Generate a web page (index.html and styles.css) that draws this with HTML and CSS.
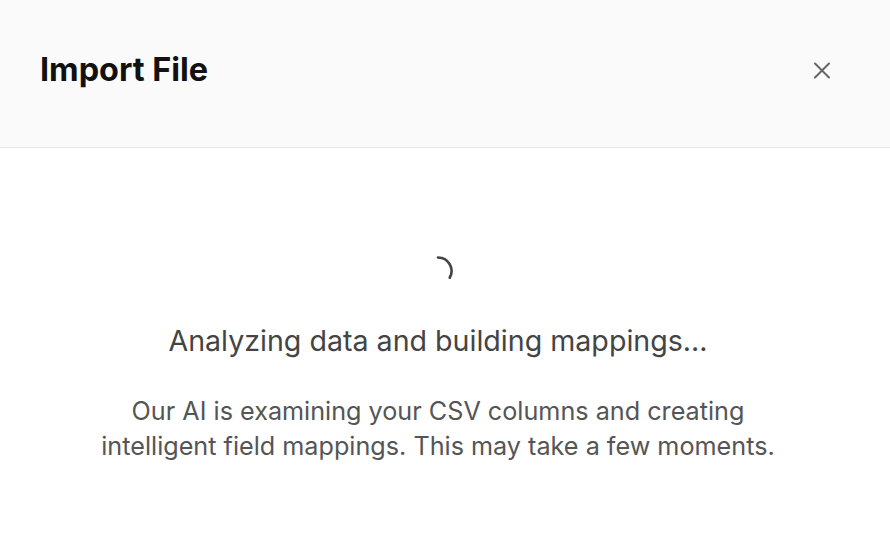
FILE: index.html
```html
<!DOCTYPE html>
<html>
<head>
<meta charset="utf-8">
<link rel="stylesheet" href="styles.css">
</head>
<body>
<div class="modal">
  <header class="modal-header">
    <h1 class="modal-title">Import File</h1>
    <button class="close-btn" aria-label="Close">
      <svg width="20" height="20" viewBox="0 0 20 20" fill="none" stroke="#666" stroke-width="2" stroke-linecap="round"><path d="M3 3.5L17 17.5M17 3.5L3 17.5"/></svg>
    </button>
  </header>
  <main class="modal-body">
    <svg class="spinner" width="32" height="32" viewBox="0 0 32 32" fill="none"><path d="M16 2.5A13.5 13.5 0 0 1 27.7 22.75" stroke="#444" stroke-width="2.6" stroke-linecap="round"/></svg>
    <h2 class="status">Analyzing data and building mappings...</h2>
    <p class="desc">Our AI is examining your CSV columns and creating intelligent field mappings. This may take a few moments.</p>
  </main>
</div>
</body>
</html>
```
FILE: styles.css
```css
* { box-sizing: border-box; }
html, body { margin: 0; padding: 0; background: #fff; }
body { font-family: Inter, "Noto Sans", sans-serif; width: 890px; height: 558px; overflow: hidden; }
.modal { display: flex; flex-direction: column; height: 100%; }
.modal-header {
  height: 148px;
  background: #fafafa;
  border-bottom: 1px solid #e5e5e5;
  display: flex;
  align-items: center;
  justify-content: space-between;
  padding: 0 58px 8px 40px;
}
.modal-title { margin: 0; font-size: 32.4px; font-weight: 700; color: #111; }
.close-btn { background: none; border: 0; padding: 0; width: 20px; height: 20px; display: flex; cursor: pointer; }
.modal-body { display: flex; flex-direction: column; align-items: center; padding: 107px 14px 0 0; text-align: center; }
.spinner { display: block; }
.status { margin: 35px 0 0; font-size: 28.6px; font-weight: 400; color: #444; line-height: 37px; }
.desc { margin: 35px 0 0; max-width: 700px; font-size: 25.2px; line-height: 35px; color: #555; }
```
